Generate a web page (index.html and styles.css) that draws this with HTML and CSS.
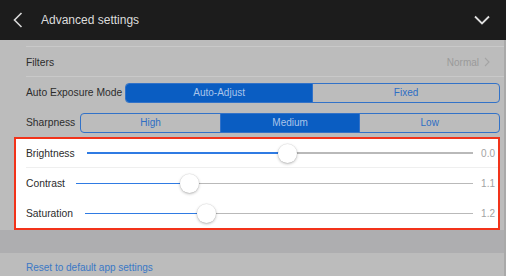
FILE: index.html
```html
<!DOCTYPE html>
<html>
<head>
<meta charset="utf-8">
<link rel="stylesheet" href="styles.css">
</head>
<body>
<div class="page">
  <header class="topbar">
    <svg class="back" width="10" height="16" viewBox="0 0 10 16"><path d="M8.5 1 L1.5 8 L8.5 15" fill="none" stroke="#d8d8d8" stroke-width="1.6"/></svg>
    <span class="title">Advanced settings</span>
    <svg class="down" width="16" height="10" viewBox="0 0 16 10"><path d="M1 1.5 L8 8.5 L15 1.5" fill="none" stroke="#e0e0e0" stroke-width="1.8"/></svg>
  </header>
  <section class="gray">
    <div class="row first">
      <span class="label">Filters</span>
      <span class="value-link">Normal <svg width="6" height="10" viewBox="0 0 6 10"><path d="M1 1 L5 5 L1 9" fill="none" stroke="#a4a4a4" stroke-width="1.1"/></svg></span>
    </div>
    <div class="row ctrl">
      <span class="label">Auto Exposure Mode</span>
      <div class="seg seg-exp">
        <span class="opt on">Auto-Adjust</span>
        <span class="opt">Fixed</span>
      </div>
    </div>
    <div class="row ctrl">
      <span class="label">Sharpness</span>
      <div class="seg seg-sharp">
        <span class="opt">High</span>
        <span class="opt on">Medium</span>
        <span class="opt">Low</span>
      </div>
    </div>
  </section>
  <section class="sliders">
    <div class="srow r1">
      <span class="label">Brightness</span>
      <div class="track"><div class="fill" style="width:52%"></div><div class="thumb" style="left:52%"></div></div>
      <span class="val">0.0</span>
    </div>
    <div class="srow r2">
      <span class="label">Contrast</span>
      <div class="track"><div class="fill" style="width:28.7%"></div><div class="thumb" style="left:28.7%"></div></div>
      <span class="val">1.1</span>
    </div>
    <div class="srow r3">
      <span class="label">Saturation</span>
      <div class="track"><div class="fill" style="width:31.2%"></div><div class="thumb" style="left:31.2%"></div></div>
      <span class="val">1.2</span>
    </div>
  </section>
  <div class="band"></div>
  <div class="reset"><span>Reset to default app settings</span></div>
</div>
</body>
</html>
```
FILE: styles.css
```css
* { box-sizing: border-box; }
html, body { margin: 0; padding: 0; }
body {
  width: 506px;
  height: 276px;
  overflow: hidden;
  font-family: "Liberation Sans", Arial, sans-serif;
  background: #bcbcbc;
}
.page {
  display: flex;
  flex-direction: column;
  height: 276px;
  background: #bcbcbc;
  border-right: 2px solid #a9a9a9;
}
.topbar {
  height: 40px;
  flex: none;
  background: #1c1c1c;
  display: flex;
  align-items: center;
  padding: 0 16px 0 13px;
  margin-right: -2px;
}
.topbar .title {
  color: #dcdcdc;
  font-size: 12px;
  margin-left: 18px;
  flex: 1;
}
.gray {
  padding: 6px 0 0 26px;
  flex: none;
}
.row {
  display: flex;
  align-items: center;
}
.row.first {
  height: 31px;
  border-top: 1px solid #c9c9c9;
  border-bottom: 1px solid #c9c9c9;
  justify-content: space-between;
  padding: 1px 14px 0 0;
}
.label {
  font-size: 10.3px;
  color: #2c2c2c;
}
.value-link {
  font-size: 10px;
  color: #9a9a9a;
  display: flex;
  align-items: center;
  gap: 5px;
}
.row.ctrl {
  height: 30px;
  padding: 1px 4px 0 0;
}
.seg {
  flex: 1;
  display: flex;
  height: 20px;
  border: 1px solid #3272c8;
  border-radius: 4px;
  overflow: hidden;
}
.seg-exp { margin-left: 3px; }
.seg-sharp { margin-left: 5px; }
.opt {
  flex: 1;
  display: flex;
  align-items: center;
  justify-content: center;
  font-size: 10px;
  color: #2e6ec4;
  border-left: 1px solid #3272c8;
}
.opt:first-child { border-left: none; }
.opt.on {
  background: #0a5dc2;
  color: #a9c4ea;
}
.sliders {
  flex: none;
  margin: 0 4px 0 14px;
  background: #ffffff;
  border: 2px solid #f2331a;
  display: flex;
  flex-direction: column;
  padding: 0 3px 0 10px;
}
.srow {
  display: flex;
  align-items: center;
}
.srow.r1 {
  height: 29px;
  border-bottom: 1px solid #efefef;
  margin-right: -3px;
  padding-right: 3px;
}
.srow.r2 { height: 31px; }
.srow.r3 { height: 29px; }
.srow.r1 .track { margin-left: 12px; }
.srow.r2 .track { margin-left: 11px; }
.srow.r3 .track { margin-left: 12px; }
.track {
  flex: 1;
  position: relative;
  height: 1.5px;
  background: #b9b9b9;
  margin-right: 6px;
}
.fill {
  height: 100%;
  background: #2f7be3;
}
.thumb {
  position: absolute;
  top: 50%;
  width: 19px;
  height: 19px;
  margin: -9.5px 0 0 -9.5px;
  border-radius: 50%;
  background: #ffffff;
  box-shadow: 0 1px 3px rgba(0,0,0,0.28), 0 0 0 0.5px rgba(0,0,0,0.08);
}
.val {
  font-size: 10px;
  color: #a3a3a3;
  width: 16px;
  text-align: right;
}
.band {
  flex: none;
  height: 23px;
  background: #aeaeb0;
}
.reset {
  flex: 1;
  padding: 7px 0 0 26px;
  line-height: 12px;
}
.reset span {
  font-size: 10px;
  color: #3a78c6;
}
```
